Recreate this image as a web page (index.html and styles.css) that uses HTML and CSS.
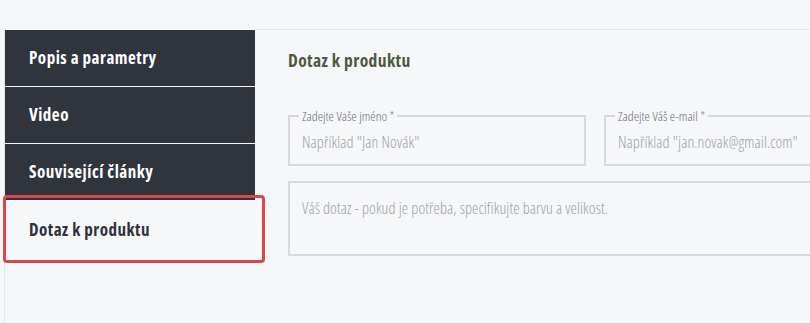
FILE: index.html
```html
<!DOCTYPE html>
<html lang="cs">
<head>
  <meta charset="UTF-8" />
  <meta name="viewport" content="width=device-width, initial-scale=1.0" />
  <title>Dotaz k produktu</title>
  <link rel="stylesheet" href="styles.css">
</head>
<body>
  <div class="product-tabs">
    <!-- Tab menu -->
    <ul class="tab-menu">
      <li class="tab-item">Popis a parametry</li>
      <li class="tab-item">Video</li>
      <li class="tab-item">Související články</li>
      <li class="tab-item active">Dotaz k produktu</li>
    </ul>

    <!-- Tab content -->
    <div class="tab-content">
      <h2>Dotaz k produktu</h2>
      <form class="question-form">
        <div class="form-row">
          <fieldset class="field">
            <legend>Zadejte Vaše jméno *</legend>
            <input type="text" placeholder="Například &quot;Jan Novák&quot;" />
          </fieldset>
          <fieldset class="field">
            <legend>Zadejte Váš e-mail *</legend>
            <input type="email" placeholder="Například &quot;jan.novak@gmail.com&quot;" />
          </fieldset>
        </div>
        <div class="field message">
          <textarea placeholder="Váš dotaz - pokud je potřeba, specifikujte barvu a velikost."></textarea>
        </div>
      </form>
    </div>
  </div>
</body>
</html>
```

FILE: styles.css
```css
body {
    margin: 0;
    background: #f6f7f9;
    font-family: "Open Sans", "Roboto", sans-serif;
    font-stretch: 75%;
    overflow: hidden;
  }

  .product-tabs {
    display: flex;
    padding-top: 30px;
    height: 293px;
  }

  .tab-menu {
    list-style: none;
    margin: 0 0 0 4px;
    padding: 0;
    width: 250px;
    border-left: 1px solid #e4e6ea;
    flex-shrink: 0;
  }

  .tab-item {
    height: 56px;
    line-height: 56px;
    padding-left: 24px;
    background: #30353d;
    color: #fff;
    font-size: 17px;
    font-weight: bold;
    letter-spacing: 0.5px;
    border-bottom: 1px solid #f6f7f9;
  }

  .tab-item.active {
    position: relative;
    height: 57px;
    line-height: 58px;
    background: #f6f7f9;
    color: #2c313a;
    border-bottom: none;
  }

  /* highlight frame round the active tab */
  .tab-item.active::after {
    content: "";
    position: absolute;
    left: -2px;
    right: -10px;
    top: -6px;
    bottom: -5px;
    border: 3px solid #d9474d;
    border-radius: 4px;
  }

  .tab-content {
    flex: 1;
    margin-top: -1px;
    border-top: 1px solid #e4e6ea;
    padding: 0 0 0 33px;
  }

  h2 {
    margin: 18px 0 0;
    font-size: 17.5px;
    color: #4e5740;
    letter-spacing: 0.4px;
  }

  .question-form {
    width: 614px;
    margin-top: 35px;
  }

  .form-row {
    display: flex;
    gap: 18px;
  }

  .field {
    margin: 0;
    padding: 0 12px;
    border: 2px solid #d6d9df;
    min-width: 0;
  }

  .form-row .field {
    flex: 1;
    height: 55px;
  }

  legend {
    padding: 0 3px;
    margin-left: -3px;
    font-size: 13.5px;
    font-weight: 300;
    color: #6a6e74;
  }

  input,
  textarea {
    width: 100%;
    border: none;
    background: transparent;
    padding: 0;
    font-family: inherit;
    font-stretch: 75%;
    font-size: 16px;
    font-weight: 300;
    letter-spacing: 0.1px;
    color: #333;
    outline: none;
  }

  input {
    height: 30px;
    margin-top: 2px;
  }

  input::placeholder,
  textarea::placeholder {
    color: #9da1a8;
  }

  .field.message {
    margin-top: 15px;
    height: 71px;
  }

  textarea {
    height: 50px;
    margin-top: 14px;
    resize: none;
  }
```
